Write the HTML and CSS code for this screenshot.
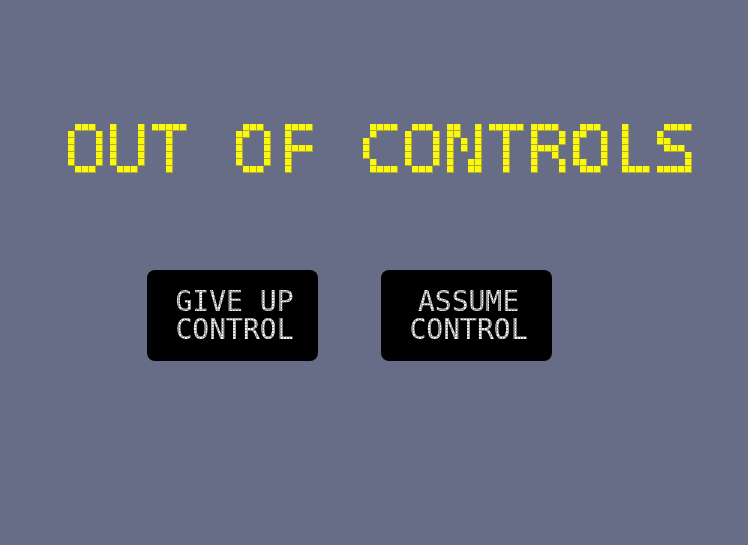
FILE: index.html
```html
<!DOCTYPE html>
<html lang="en">
<head>
<meta charset="utf-8">
<meta name="viewport" content="width=device-width, initial-scale=1">
<title>Out of Controls</title>
<link rel="stylesheet" href="styles.css">
</head>
<body>
<svg class="defs" width="0" height="0" aria-hidden="true">
  <!-- Samples the text once per 7px cell and lights the whole cell -->
  <filter id="matrix" x="0" y="0" width="1" height="1" primitiveUnits="userSpaceOnUse" color-interpolation-filters="sRGB">
    <feFlood x="6" y="5" width="1" height="1" flood-color="#000"/>
    <feOffset x="6" y="5" width="7" height="7" dx="0" dy="0"/>
    <feTile result="points"/>
    <feComposite in="SourceGraphic" in2="points" operator="in"/>
    <feComponentTransfer>
      <feFuncA type="linear" slope="80" intercept="-32"/>
    </feComponentTransfer>
    <feMorphology operator="dilate" radius="3" result="cells"/>
    <feFlood x="10" y="9" width="6" height="6" flood-color="#fbf80f"/>
    <feOffset x="10" y="9" width="7" height="7" dx="0" dy="0"/>
    <feTile result="lamps"/>
    <feFlood flood-color="#b0aa2c"/>
    <feComposite in2="cells" operator="in" result="lines"/>
    <feComposite in="lamps" in2="cells" operator="in" result="lit"/>
    <feMerge>
      <feMergeNode in="lines"/>
      <feMergeNode in="lit"/>
    </feMerge>
  </filter>
</svg>
<main class="screen">
  <h1 class="title"><span class="word">OUT</span> <span class="word">OF</span> <span class="word">CONTROLS</span></h1>
  <div class="actions">
    <button class="choice" type="button"><span class="label">GIVE UP CONTROL</span></button>
    <button class="choice" type="button"><span class="label">ASSUME CONTROL</span></button>
  </div>
</main>
</body>
</html>
```
FILE: styles.css
```css
* {
  box-sizing: border-box;
}

body {
  margin: 0;
  min-height: 100vh;
  background: #686d87;
  font-family: "DejaVu Sans Mono", monospace;
}

.defs {
  position: absolute;
}

.screen {
  display: flex;
  flex-direction: column;
  align-items: center;
  gap: 85px;
  padding-top: 115px;
}

.title {
  margin: 0;
  padding-left: 14px;
  font-size: 70px;
  font-weight: 400;
  line-height: 70px;
  white-space: nowrap;
  color: #fbf80f;
}

.word {
  display: inline-block;
  filter: url(#matrix);
}

.actions {
  display: flex;
  gap: 63px;
  padding-right: 49px;
}

.choice {
  width: 171px;
  height: 91px;
  padding: 0 24px 0 28px;
  border: 0;
  border-radius: 8px;
  background: #000;
  font-family: inherit;
  cursor: pointer;
}

/* Fine dot grid over the small lettering */
.label {
  display: block;
  font-size: 28px;
  line-height: 28px;
  color: transparent;
  background:
    linear-gradient(to right, #9c9c9c 1px, transparent 1px) 0 0 / 3px 3px,
    linear-gradient(to bottom, #9c9c9c 1px, transparent 1px) 0 0 / 3px 3px,
    #f4f4f4;
  background-clip: text;
  -webkit-background-clip: text;
}
```
